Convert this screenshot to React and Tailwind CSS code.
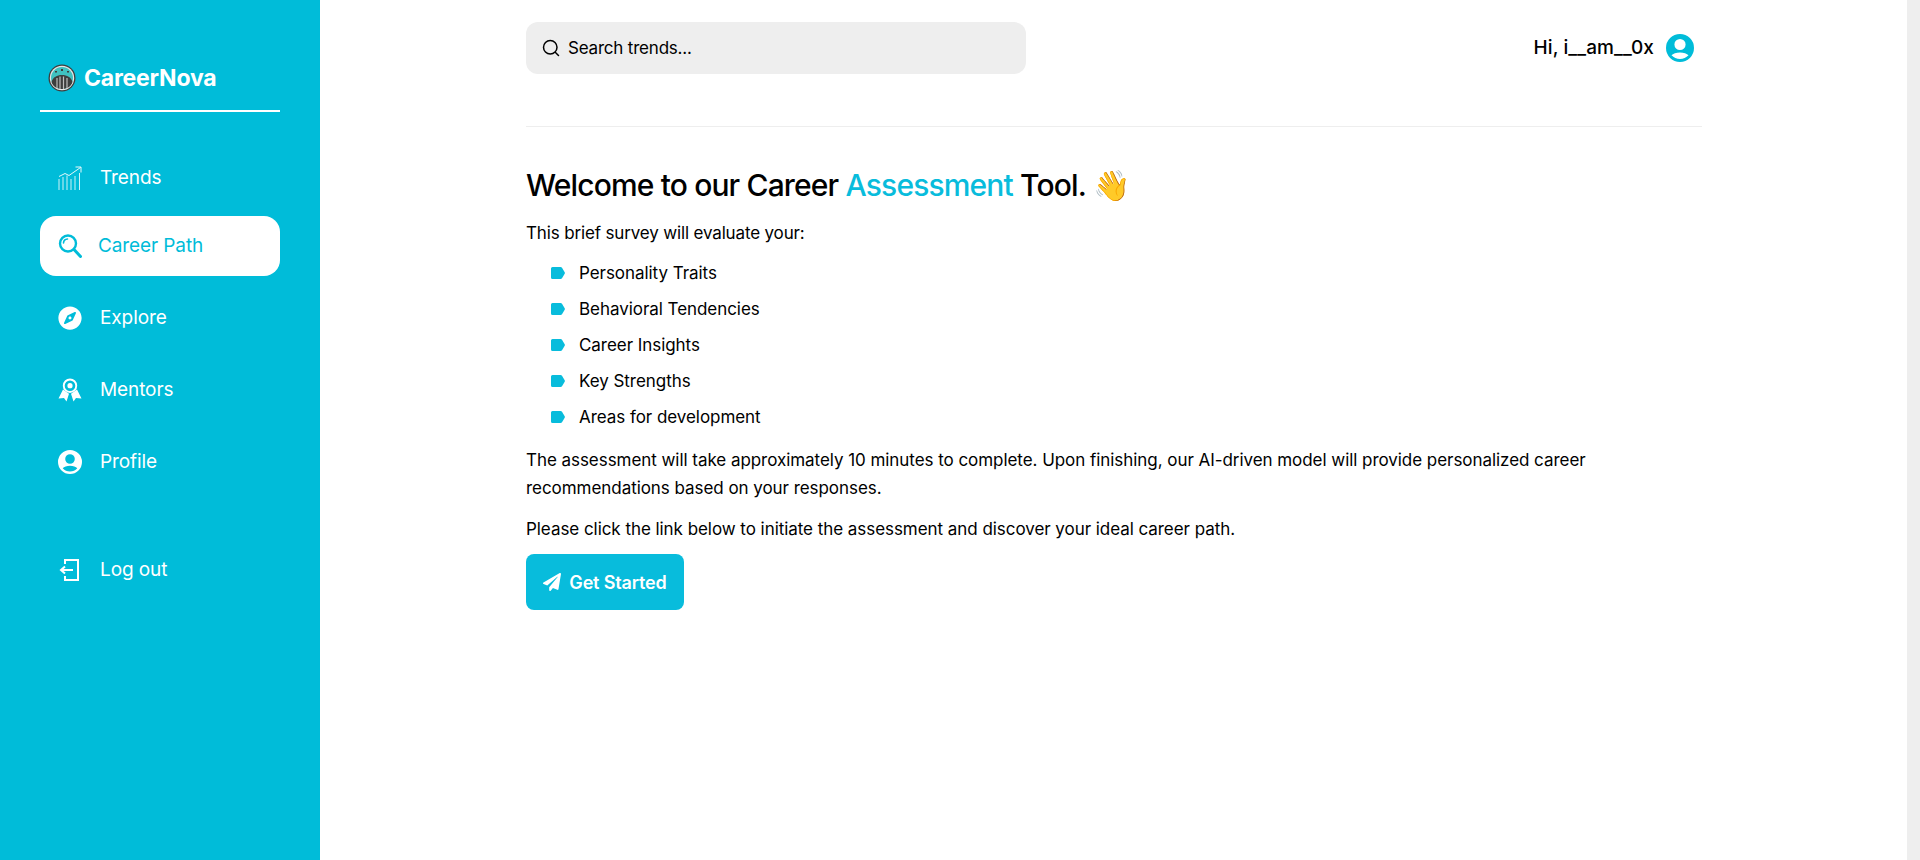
import { FaCompass, FaPaperPlane } from "react-icons/fa";

const font = { fontFamily: "Inter, 'Noto Sans', sans-serif" };

function UserIcon({ className }) {
  return (
    <svg viewBox="0 0 24 24" className={className} fill="currentColor">
      <path fillRule="evenodd" d="M12 0a12 12 0 1 0 0 24a12 12 0 0 0 0-24Zm0 4.200a4.800 4.800 0 1 1 0 9.600a4.800 4.800 0 0 1 0-9.600Zm0 11.600c3.300 0 5.900 1 7.300 2.500a10 10 0 0 1-14.600 0c1.400-1.500 4-2.500 7.300-2.500Z" />
    </svg>
  );
}

function TrendsIcon({ className }) {
  return (
    <svg viewBox="0 0 24 24" className={className} fill="none" stroke="currentColor" strokeWidth="0.9">
      <path d="M1 10.500L7 7.500L11 9.500L22.500 1.500M17.500 1H23V6.500" />
      <path strokeOpacity="0.9" d="M1 13V24M5 11V24M9 9.500V24M13 13V24M17 10V24M21.500 7V24" />
    </svg>
  );
}

function PathIcon({ className }) {
  return (
    <svg viewBox="0 0 24 24" className={className} fill="none" stroke="currentColor" strokeWidth="2.400" strokeLinecap="round">
      <circle cx="10" cy="9.500" r="8" />
      <path d="M16 15.500L22.500 22.500" strokeWidth="3" />
      <path d="M5.500 9a4.200 4.200 0 0 1 4-4" strokeWidth="1.600" />
    </svg>
  );
}

function MentorIcon({ className }) {
  return (
    <svg viewBox="0 0 24 24" className={className} fill="currentColor">
      <path fillRule="evenodd" d="M12 0.500a7.200 7.200 0 1 0 0 14.400a7.200 7.200 0 0 0 0-14.400Zm0 1.900a5.300 5.300 0 1 1 0 10.600a5.300 5.300 0 0 1 0-10.600Zm0 2.700a2.600 2.600 0 1 0 0 5.200a2.600 2.600 0 0 0 0-5.200Z" />
      <path d="M5 11.500L11 15.800L8.500 23.500L6 20L0.500 20.500ZM19 11.500L13 15.800L15.500 23.500L18 20L23.500 20.500Z" />
    </svg>
  );
}

function LogoutIcon({ className }) {
  return (
    <svg viewBox="0 0 24 24" className={className} fill="none" stroke="currentColor" strokeWidth="2">
      <path d="M7 6V2H20V22H7V18" />
      <path d="M15 12H3M7 8.500L3 12L7 15.500" />
    </svg>
  );
}

function Logo() {
  return (
    <svg viewBox="0 0 28 28" className="w-7 h-7 shrink-0">
      <circle cx="14" cy="14" r="13.500" fill="#3d3d3d" />
      <circle cx="14" cy="14" r="12.200" fill="#e8e8e8" />
      <circle cx="14" cy="14" r="11" fill="#3fc1c0" />
      <path d="M3.500 18C5 13 9 11 14 11S23 13 24.500 18C23 23 18 25 14 25S5 23 3.500 18Z" fill="#3d3d3d" />
      <path d="M9 14V24M12 12.500V25M15.500 12.500V25M19 14V24" stroke="#bdbdbd" strokeWidth="1.200" />
      <path d="M13 5h2v2h-2ZM7 7h2v1.500H7ZM19 7h2v1.500h-2Z" fill="#3d3d3d" />
    </svg>
  );
}

function TagIcon() {
  return (
    <svg viewBox="0 0 14 12" className="w-3.5 h-3 shrink-0 text-[#08bcdc] -mt-0.5" fill="currentColor">
      <path d="M1.500 0H9.500C10.200 0 10.700 0.300 11 0.700L13.700 5.200C14 5.700 14 6.300 13.700 6.800L11 11.300C10.700 11.700 10.200 12 9.500 12H1.500A1.500 1.500 0 0 1 0 10.500V1.500A1.500 1.500 0 0 1 1.500 0Z" />
    </svg>
  );
}

const navItems = [
  { label: "Trends", icon: TrendsIcon },
  { label: "Career Path", icon: PathIcon, active: true },
  { label: "Explore", icon: FaCompass },
  { label: "Mentors", icon: MentorIcon },
  { label: "Profile", icon: UserIcon },
];

const traits = [
  "Personality Traits",
  "Behavioral Tendencies",
  "Career Insights",
  "Key Strengths",
  "Areas for development",
];

function NavRow({ item }) {
  const Icon = item.icon;
  return (
    <a
      className={`h-[60px] flex items-center pl-[18px] text-[19px] tracking-[-0.1px] rounded-2xl ${
        item.active ? "bg-white text-[#00bcd9] gap-4 -mt-1" : "text-white gap-[18px]"
      }`}
    >
      <Icon className="w-6 h-6 shrink-0" />
      <span className="pt-px">{item.label}</span>
    </a>
  );
}

export default function App() {
  return (
    <div className="flex h-[860px] overflow-hidden bg-white text-black" style={font}>
      <aside className="w-80 shrink-0 bg-[#00bcd9] px-10 pt-16">
        <div className="flex items-center gap-2 pl-2 h-7">
          <Logo />
          <span className="text-[23px] font-bold text-white tracking-[-0.2px]">CareerNova</span>
        </div>
        <div className="h-0.5 bg-white mt-[18px] mb-9" />
        <nav className="flex flex-col gap-3">
          {navItems.map((item) => (
            <NavRow key={item.label} item={item} />
          ))}
          <div className="mt-9">
            <NavRow item={{ label: "Log out", icon: LogoutIcon }} />
          </div>
        </nav>
      </aside>

      <main className="flex-1 pl-[206px] pr-[205px]">
        <header className="h-[127px] border-b border-[#eeeeee] pt-[22px]">
          <div className="flex items-start justify-between pr-2">
            <div className="w-[500px] h-[52px] bg-[#eeeeee] rounded-xl flex items-center pl-4 gap-2 text-[17px] tracking-[-0.2px]">
              <svg viewBox="0 0 24 24" className="w-[18px] h-[18px]" fill="none" stroke="currentColor" strokeWidth="2" strokeLinecap="round">
                <circle cx="11" cy="11" r="9" />
                <path d="M18 18L22 22" />
              </svg>
              <span className="pt-px">Search trends...</span>
            </div>
            <div className="flex items-center gap-3 h-[52px]">
              <span className="text-[19px] font-medium tracking-[0.1px] pt-px">Hi, i__am__0x</span>
              <UserIcon className="w-7 h-7 text-[#00bcd9]" />
            </div>
          </div>
        </header>

        <section className="pt-[37px] text-[17px]">
          <h1 className="text-[30px] leading-[42px] font-medium tracking-[-0.85px] text-black">
            Welcome to our Career <span className="text-[#08bcdc]">Assessment</span> Tool.{" "}
            <span className="font-normal">👋</span>
          </h1>
          <p className="mt-[13px] leading-7 tracking-[-0.15px]">This brief survey will evaluate your:</p>
          <ul className="mt-[13px] flex flex-col gap-2 pl-[25px] tracking-[-0.05px]">
            {traits.map((trait) => (
              <li key={trait} className="flex items-center gap-[14px] h-7">
                <TagIcon />
                <span>{trait}</span>
              </li>
            ))}
          </ul>
          <p className="mt-[14px] leading-7 max-w-[1100px] tracking-[-0.05px]">
            The assessment will take approximately 10 minutes to complete. Upon finishing, our AI-driven model will provide personalized career recommendations based on your responses.
          </p>
          <p className="mt-[13px] leading-7 tracking-[-0.05px]">
            Please click the link below to initiate the assessment and discover your ideal career path.
          </p>
          <button className="mt-[11px] w-[158px] h-14 rounded-lg bg-[#08bcdc] text-white text-[18px] font-semibold tracking-[-0.15px] flex items-center justify-center gap-2">
            <FaPaperPlane className="w-[18px] h-[18px]" />
            Get Started
          </button>
        </section>
      </main>

      <div className="w-[13px] shrink-0 bg-[#eeeeee]" />
    </div>
  );
}
